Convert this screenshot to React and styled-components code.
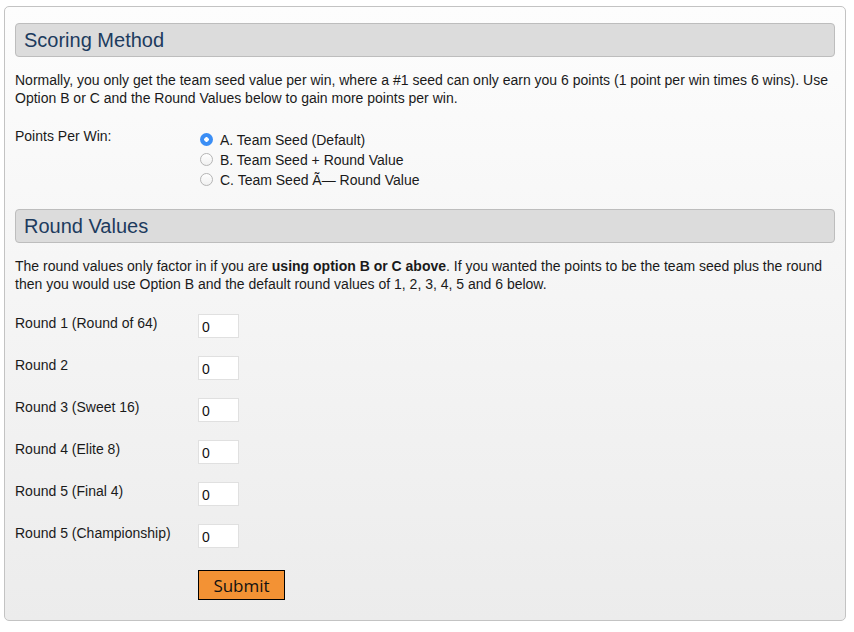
import styled, { createGlobalStyle } from "styled-components"

const Global = createGlobalStyle`
body{
    margin: 0;
    font-family: "Liberation Sans", Arial, sans-serif;
    background: #fff;
}
`

const rounds = [
    "Round 1 (Round of 64)",
    "Round 2",
    "Round 3 (Sweet 16)",
    "Round 4 (Elite 8)",
    "Round 5 (Final 4)",
    "Round 5 (Championship)",
]

const options = [
    "A. Team Seed (Default)",
    "B. Team Seed + Round Value",
    "C. Team Seed Ã— Round Value",
]

const App = () => {
    return(
        <>
            <Global />
            <Panel>
                <SectionHead>Scoring Method</SectionHead>
                <Text>Normally, you only get the team seed value per win, where a #1 seed can only earn you 6 points (1 point per win times 6 wins). Use Option B or C and the Round Values below to gain more points per win.</Text>
                <Field>
                    <Label>Points Per Win:</Label>
                    <Radios>
                        {options.map((o, i) => (
                            <RadioRow key={o}>
                                <Radio type="radio" name="ppw" defaultChecked={i === 0} />
                                <span>{o}</span>
                            </RadioRow>
                        ))}
                    </Radios>
                </Field>
                <SectionHead>Round Values</SectionHead>
                <Text>The round values only factor in if you are <b>using option B or C above</b>. If you wanted the points to be the team seed plus the round then you would use Option B and the default round values of 1, 2, 3, 4, 5 and 6 below.</Text>
                <Rounds>
                    {rounds.map((r) => (
                        <RoundRow key={r}>
                            <Label>{r}</Label>
                            <NumInput defaultValue="0" />
                        </RoundRow>
                    ))}
                </Rounds>
                <Submit>Submit</Submit>
            </Panel>
        </>
    )
}

export default App

const Panel = styled.div`
width: 842px;
box-sizing: border-box;
margin: 6px 0 0 4px;
padding: 16px 10px 20px 10px;
border: 1px solid #c3c3c3;
border-radius: 5px;
background: linear-gradient(#fdfdfd, #ececec);
`

const SectionHead = styled.h2`
margin: 0;
height: 34px;
box-sizing: border-box;
padding: 0 8px;
display: flex;
align-items: center;
background: #dcdcdc;
border: 1px solid #bdbdbd;
border-radius: 4px;
color: #1d3b5e;
font-size: 20px;
font-weight: 400;
`

const Text = styled.p`
margin: 14px 0 0 0;
font-size: 14px;
line-height: 18px;
color: #1a1a1a;
b{
    font-weight: 700;
}
`

const Field = styled.div`
display: flex;
margin: 20px 0 19px 0;
`

const Label = styled.div`
width: 183px;
font-size: 14px;
line-height: 18px;
color: #1a1a1a;
flex-shrink: 0;
`

const Radios = styled.div`
display: flex;
flex-direction: column;
padding-top: 3px;
`

const RadioRow = styled.label`
display: flex;
align-items: center;
height: 20px;
font-size: 14px;
color: #1a1a1a;
span{
    margin-left: 7px;
}
`

const Radio = styled.input`
appearance: none;
margin: 0 0 2px 2px;
width: 13px;
height: 13px;
border-radius: 50%;
border: 1px solid #b5b5b5;
background: linear-gradient(#fff, #f0f0f0);
box-sizing: border-box;
&:checked{
    border: none;
    background: radial-gradient(circle, #fff 0 2px, #3b8ef5 2.5px);
}
`

const Rounds = styled.div`
display: flex;
flex-direction: column;
gap: 18px;
margin-top: 21px;
`

const RoundRow = styled.div`
display: flex;
align-items: flex-start;
`

const NumInput = styled.input`
width: 41px;
height: 24px;
box-sizing: border-box;
border: 1px solid #e0e0e0;
background: #fff;
padding: 2px 3px 0 3px;
font-family: "Liberation Sans", Arial, sans-serif;
font-size: 14px;
color: #111;
outline: none;
`

const Submit = styled.button`
margin: 22px 0 0 183px;
width: 87px;
height: 30px;
background: #f39234;
border: 1px solid #000;
font-family: "Open Sans", sans-serif;
font-size: 17px;
color: #111;
padding: 0;
`
